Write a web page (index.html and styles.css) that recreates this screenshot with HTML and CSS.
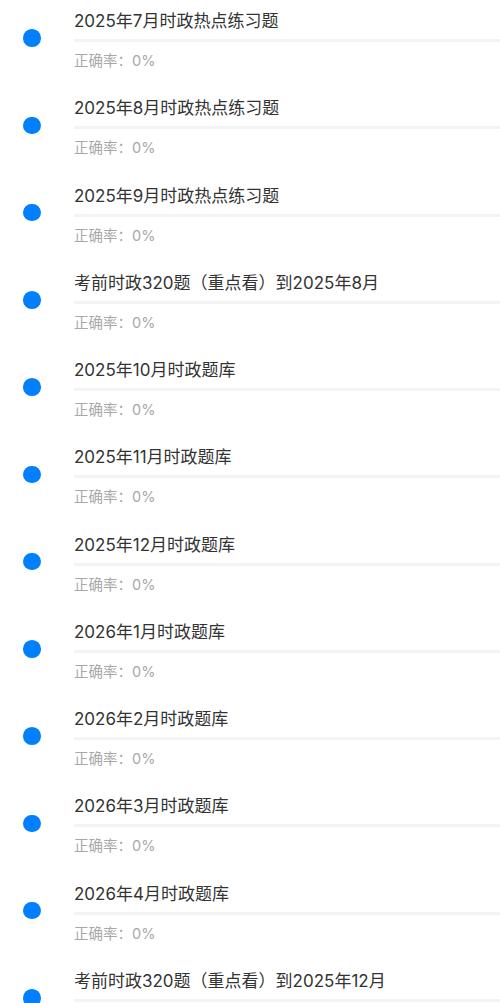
FILE: index.html
```html
<!DOCTYPE html>
<html lang="zh">
<head>
<meta charset="utf-8">
<link rel="stylesheet" href="styles.css">
</head>
<body>
<ul class="list">
  <li class="item"><span class="dot"></span><div class="info"><div class="title">2025年7月时政热点练习题</div><div class="bar"></div><div class="rate">正确率：0%</div></div></li>
  <li class="item"><span class="dot"></span><div class="info"><div class="title">2025年8月时政热点练习题</div><div class="bar"></div><div class="rate">正确率：0%</div></div></li>
  <li class="item"><span class="dot"></span><div class="info"><div class="title">2025年9月时政热点练习题</div><div class="bar"></div><div class="rate">正确率：0%</div></div></li>
  <li class="item"><span class="dot"></span><div class="info"><div class="title">考前时政320题（重点看）到2025年8月</div><div class="bar"></div><div class="rate">正确率：0%</div></div></li>
  <li class="item"><span class="dot"></span><div class="info"><div class="title">2025年10月时政题库</div><div class="bar"></div><div class="rate">正确率：0%</div></div></li>
  <li class="item"><span class="dot"></span><div class="info"><div class="title">2025年11月时政题库</div><div class="bar"></div><div class="rate">正确率：0%</div></div></li>
  <li class="item"><span class="dot"></span><div class="info"><div class="title">2025年12月时政题库</div><div class="bar"></div><div class="rate">正确率：0%</div></div></li>
  <li class="item"><span class="dot"></span><div class="info"><div class="title">2026年1月时政题库</div><div class="bar"></div><div class="rate">正确率：0%</div></div></li>
  <li class="item"><span class="dot"></span><div class="info"><div class="title">2026年2月时政题库</div><div class="bar"></div><div class="rate">正确率：0%</div></div></li>
  <li class="item"><span class="dot"></span><div class="info"><div class="title">2026年3月时政题库</div><div class="bar"></div><div class="rate">正确率：0%</div></div></li>
  <li class="item"><span class="dot"></span><div class="info"><div class="title">2026年4月时政题库</div><div class="bar"></div><div class="rate">正确率：0%</div></div></li>
  <li class="item"><span class="dot"></span><div class="info"><div class="title">考前时政320题（重点看）到2025年12月</div><div class="bar"></div><div class="rate">正确率：0%</div></div></li>
</ul>
</body>
</html>
```
FILE: styles.css
```css
html, body {
  margin: 0;
  padding: 0;
  background: #fff;
  overflow: hidden;
}
body {
  font-family: Inter, "Noto Sans CJK SC", sans-serif;
}
.list {
  list-style: none;
  margin: 0;
  padding: 0;
}
.item {
  display: flex;
  align-items: flex-start;
  height: 87.25px;
  box-sizing: border-box;
  padding-top: 10px;
}
.dot {
  flex: none;
  width: 17.5px;
  height: 17.5px;
  border-radius: 50%;
  background: #0080ff;
  margin: 19.25px 33.5px 0 23px;
}
.info {
  flex: 1;
  min-width: 0;
}
.title {
  font-size: 17px;
  line-height: 22px;
  color: #333;
  white-space: nowrap;
}
.bar {
  height: 3px;
  margin-top: 7px;
  background: #f3f3f3;
}
.rate {
  margin-top: 9px;
  font-size: 14.5px;
  line-height: 20px;
  color: #a8a8a8;
}
```
